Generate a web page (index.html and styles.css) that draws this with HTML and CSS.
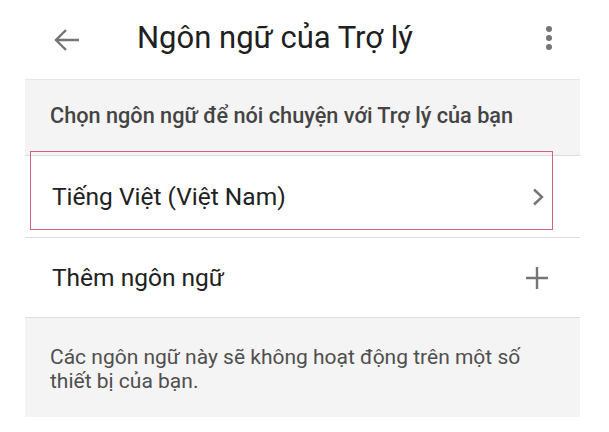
FILE: index.html
```html
<!DOCTYPE html>
<html lang="vi">
<head>
    <meta charset="UTF-8">
    <meta name="viewport" content="width=device-width, initial-scale=1.0">
    <title>Ngôn ngữ của Trợ lý</title>
    <link rel="stylesheet" href="styles.css">
</head>
<body>
    <div class="screen">
        <div class="topbar">
            <a class="back" href="javascript:;">
                <svg width="26" height="24" viewBox="0 0 26 24">
                    <path d="M25 12H2M12 2L2 12l10 10" fill="none" stroke="#757575" stroke-width="2.4"/>
                </svg>
            </a>
            <h1 class="title">Ngôn ngữ của Trợ lý</h1>
            <a class="more" href="javascript:;">
                <span class="dot"></span>
                <span class="dot"></span>
                <span class="dot"></span>
            </a>
        </div>

        <div class="panel">
            <div class="subhead">Chọn ngôn ngữ để nói chuyện với Trợ lý của bạn</div>

            <div class="row selected">
                <span class="label">Tiếng Việt (Việt Nam)</span>
                <svg class="icon" width="24" height="24" viewBox="0 0 24 24">
                    <path d="M9 4.5l8 7.5-8 7.5" fill="none" stroke="#757575" stroke-width="2.4"/>
                </svg>
            </div>
            <div class="row">
                <span class="label">Thêm ngôn ngữ</span>
                <svg class="icon" width="24" height="24" viewBox="0 0 24 24">
                    <path d="M1 12h22M12 1v22" fill="none" stroke="#757575" stroke-width="2.4"/>
                </svg>
            </div>

            <div class="note">Các ngôn ngữ này sẽ không hoạt động trên một số thiết bị của bạn.</div>
        </div>
    </div>
</body>
</html>
```

FILE: styles.css
```css
*{
    box-sizing: border-box;
}
body{
    margin: 0;
    background: #ffffff;
    font-family: Roboto, "Noto Sans", sans-serif;
    color: #212121;
}
.screen{
    width: 609px;
}
.topbar{
    display: flex;
    align-items: center;
    height: 79px;
    padding-left: 54px;
    padding-right: 57px;
}
.back{
    display: flex;
    width: 26px;
    margin-right: 57px;
}
.title{
    flex: 1;
    margin: 0;
    font-size: 31px;
    font-weight: 400;
    color: #202020;
    padding-bottom: 4px;
}
.more{
    display: flex;
    flex-direction: column;
    gap: 3px;
    padding-bottom: 4px;
}
.dot{
    width: 6px;
    height: 6px;
    border-radius: 50%;
    background: #757575;
}
.panel{
    margin-left: 25px;
    width: 555px;
}
.subhead{
    background: #f4f4f4;
    height: 77px;
    padding: 24px 0 0 25px;
    font-size: 21.7px;
    font-weight: 500;
    color: #444444;
    border-bottom: 1px solid #dddddd;
    box-shadow: inset 0 1px 1px rgba(0,0,0,0.06);
}
.row{
    position: relative;
    display: flex;
    align-items: center;
    justify-content: space-between;
    height: 80px;
    padding: 0 31px 0 27px;
    border-bottom: 1px solid #dddddd;
}
.row .label{
    font-size: 24.5px;
    color: #212121;
}
.selected{
    height: 82px;
}
/* highlight frame around the current language */
.selected::after{
    content: "";
    position: absolute;
    top: -5px;
    left: 5px;
    width: 521px;
    height: 77px;
    border: 1.5px solid #d4607a;
}
.note{
    background: #f4f4f4;
    height: 99px;
    padding: 27px 40px 0 25px;
    font-size: 21px;
    line-height: 24px;
    color: #4f4f4f;
}
```
